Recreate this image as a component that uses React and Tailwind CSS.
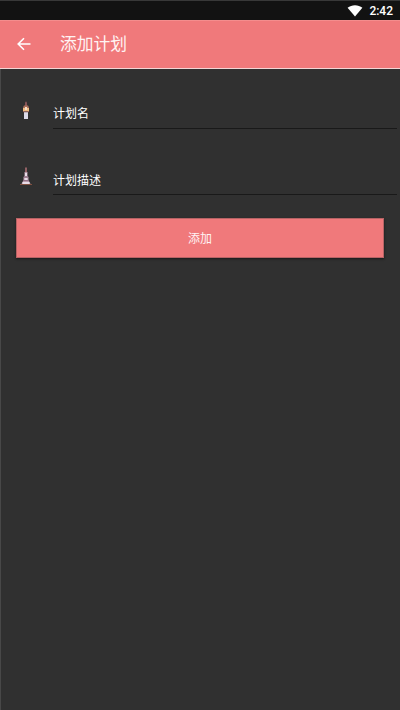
import React from 'react';

function StatusBar() {
  return (
    <div className="flex h-5 items-center justify-end border-t border-[#383838] bg-[#121212] pr-[7px]">
      <svg className="mr-[6px] h-3 w-4" viewBox="0 0 16 12" fill="#fff">
        <path d="M8 11.500 0.600 2.800C2.700 1 5.200.2 8 .2s5.300.8 7.400 2.600Z" />
      </svg>
      <span className="text-[12px] leading-5 font-medium text-white">2:42</span>
    </div>
  );
}

function AppBar() {
  return (
    <header className="flex h-[49px] items-center border-t border-b border-t-[#f48d8d] border-b-[#f4d5d5] bg-[#f0797b] pb-[2px] pl-[17px]">
      <svg className="h-[14px] w-[14px]" viewBox="0 0 14 14" fill="none" stroke="#fff" strokeWidth="1.6">
        <path d="M13.500 7H1.500M7 1.200 1.200 7 7 12.800" />
      </svg>
      <h1 className="ml-[29px] text-[16.800px] leading-6 text-[#fff3f3]">添加计划</h1>
    </header>
  );
}

function PencilIcon() {
  return (
    <svg className="h-5 w-4" viewBox="0 0 16 20">
      <path d="M7 2.500Q8 .5 9 2.500V6H7Z" fill="#865457" />
      <path d="M6 5.500h4l1 2V12H5V7.500Z" fill="#a9705c" />
      <path d="M5 8h6v3H5Z" fill="#efbd82" />
      <path d="M7 7h2v3H7Z" fill="#f5dcc9" />
      <path d="M6 12h4v7H6Z" fill="#dcdbe9" />
      <path d="M5.500 11.300h5v1h-5Z" fill="#84605c" />
    </svg>
  );
}

function TowerIcon() {
  return (
    <svg className="h-5 w-4" viewBox="0 0 16 20">
      <path d="M7.300 1.500h1.400V8H7.300Z" fill="#bd777d" />
      <path d="M6.500 6h3v4l1 1v3l2 4h-9l2-4v-3l1-1Z" fill="#b99aab" />
      <path d="M6 10.500h4v1H6ZM5 14h6v.8H5Z" fill="#86667c" />
      <path d="M7 7h2v3H7ZM6.500 12h3v2h-3ZM4.500 16h7v2h-7Z" fill="#e8dbe7" />
      <path d="M2 18h12v1H2Z" fill="#805040" />
    </svg>
  );
}

function Field({ icon, children }) {
  return (
    <div className="flex">
      <div className="w-[35px] pt-[3px]">{icon}</div>
      <div className="flex h-8 flex-1 items-start border-b border-[#191919] text-[12px] leading-5 text-white">
        {children}
      </div>
    </div>
  );
}

export default function App() {
  return (
    <div className="flex h-[710px] w-[400px] flex-col overflow-hidden bg-[#303030] font-[Roboto,'Noto_Sans_CJK_SC',sans-serif]">
      <StatusBar />
      <AppBar />
      <main className="flex-1 border-l border-[#484848]">
        <div className="pt-[28px] pr-[3px] pl-[17px]">
          <Field icon={<PencilIcon />}>
            <span className="pt-[7px]">计划名</span>
          </Field>
          <div className="h-[34px]" />
          <Field icon={<TowerIcon />}>
            <span className="pt-2">计划描述</span>
          </Field>
        </div>
        <button className="mt-[23px] ml-[15px] flex h-10 w-[368px] items-center justify-center border border-[#b76365] bg-[#f0797b] pt-[2px] text-[12px] text-[#fff3f3] shadow-[0_1px_2px_#191919]">
          添加
        </button>
      </main>
    </div>
  );
}
